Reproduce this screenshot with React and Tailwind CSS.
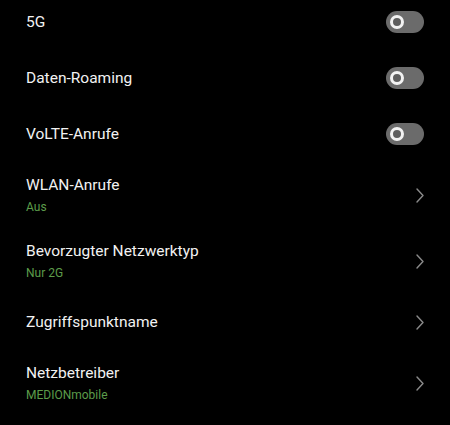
import React from "react";

function Toggle() {
  return (
    <div className="w-[38px] h-[22px] rounded-full bg-[#6b6b6b] flex items-center pl-[4px]">
      <div className="w-[14px] h-[14px] rounded-full border-[3px] border-[#f2f2f2] bg-[#5e5e5e]" />
    </div>
  );
}

function Chevron() {
  return (
    <svg width="8" height="15" viewBox="0 0 8 15" fill="none">
      <path d="M1 1 L7 7.5 L1 14" stroke="#8a8a8a" strokeWidth="1.4" strokeLinecap="round" strokeLinejoin="round" />
    </svg>
  );
}

const rows = [
  { title: "5G", toggle: true },
  { title: "Daten-Roaming", toggle: true },
  { title: "VoLTE-Anrufe", toggle: true },
  { title: "WLAN-Anrufe", sub: "Aus" },
  { title: "Bevorzugter Netzwerktyp", sub: "Nur 2G" },
  { title: "Zugriffspunktname" },
  { title: "Netzbetreiber", sub: "MEDIONmobile" },
];

export default function App() {
  return (
    <div className="w-[450px] h-[425px] bg-black overflow-hidden" style={{ fontFamily: "Roboto, 'Noto Sans', sans-serif" }}>
      <div className="-mt-[6px]">
        {rows.map((r) => (
          <div
            key={r.title}
            className={`flex items-center justify-between pl-[26px] pr-[26px] ${r.sub ? "h-[66px]" : "h-[56px]"}`}
          >
            <div className="flex flex-col">
              <span className="text-[15.5px] leading-[20px] text-[#f2f2f2]">{r.title}</span>
              {r.sub && <span className="text-[12px] leading-[16px] mt-[4px] text-[#5c9c4a]">{r.sub}</span>}
            </div>
            {r.toggle ? <Toggle /> : <Chevron />}
          </div>
        ))}
      </div>
    </div>
  );
}
